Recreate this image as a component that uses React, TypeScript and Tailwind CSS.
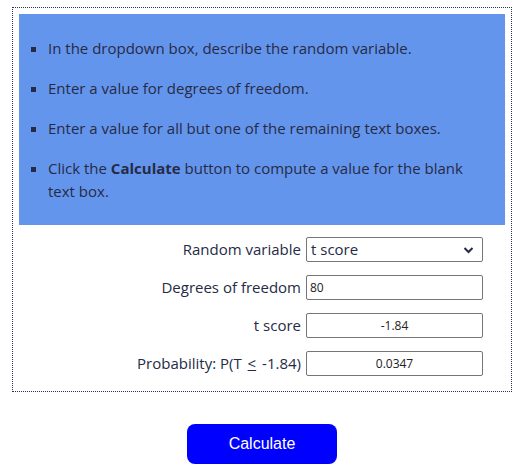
import React from "react";

const font = { fontFamily: '"Open Sans", "Noto Sans", sans-serif' };

export default function App() {
  const rows = [
    { label: <>Degrees of freedom</>, value: "80", align: "text-left" },
    { label: <>t score</>, value: "-1.84", align: "text-center" },
    {
      label: (
        <>
          Probability: P(T <span className="underline mx-[2px]">&lt;</span> -1.84)
        </>
      ),
      value: "0.0347",
      align: "text-center",
    },
  ];
  return (
    <div className="bg-white w-[521px] h-[471px] pt-[7px] pl-[12px]" style={font}>
      <div className="w-[500px] border border-dotted border-[#2a3050] p-[6px] pb-[15px]">
        <div className="bg-[#6495ed] pt-[23px] pb-[22px] pl-[14px] pr-[20px] text-[#262b45] text-[15px] leading-[23px]">
          <ul className="list-[square] pl-[15px] flex flex-col gap-[17px] marker:text-[#262b45]">
            <li>In the dropdown box, describe the random variable.</li>
            <li>Enter a value for degrees of freedom.</li>
            <li>Enter a value for all but one of the remaining text boxes.</li>
            <li>
              Click the <b>Calculate</b> button to compute a value for the blank text box.
            </li>
          </ul>
        </div>
        <div className="flex flex-col gap-[13px] mt-[12px] text-[15px] text-[#262b45]">
          <div className="flex items-center h-[25px]">
            <div className="w-[287px] text-right pr-[5px]">Random variable</div>
            <div className="relative w-[177px] h-[25px] border border-[#767676] rounded-[2px] flex items-center pl-[4px]">
              <span>t score</span>
              <svg className="absolute right-[8px] top-[8px]" width="11" height="8" viewBox="0 0 11 8">
                <path d="M1.5 2 L5.5 6 L9.5 2" fill="none" stroke="#262b45" strokeWidth="2" />
              </svg>
            </div>
          </div>
          {rows.map((r, i) => (
            <div key={i} className="flex items-center h-[25px]">
              <div className="w-[287px] text-right pr-[5px] whitespace-nowrap">{r.label}</div>
              <div
                className={`w-[177px] h-[25px] border border-[#767676] rounded-[2px] flex items-center px-[3px] text-[12px] text-[#222] ${
                  r.align === "text-center" ? "justify-center" : "justify-start"
                }`}
              >
                {r.value}
              </div>
            </div>
          ))}
        </div>
      </div>
      <div className="flex justify-center w-[500px] mt-[32px]">
        <button
          className="w-[150px] h-[40px] bg-[#0000ff] text-white rounded-[8px] text-[16px]"
          style={{ fontFamily: '"Liberation Sans", Arial, sans-serif' }}
        >
          Calculate
        </button>
      </div>
    </div>
  );
}
